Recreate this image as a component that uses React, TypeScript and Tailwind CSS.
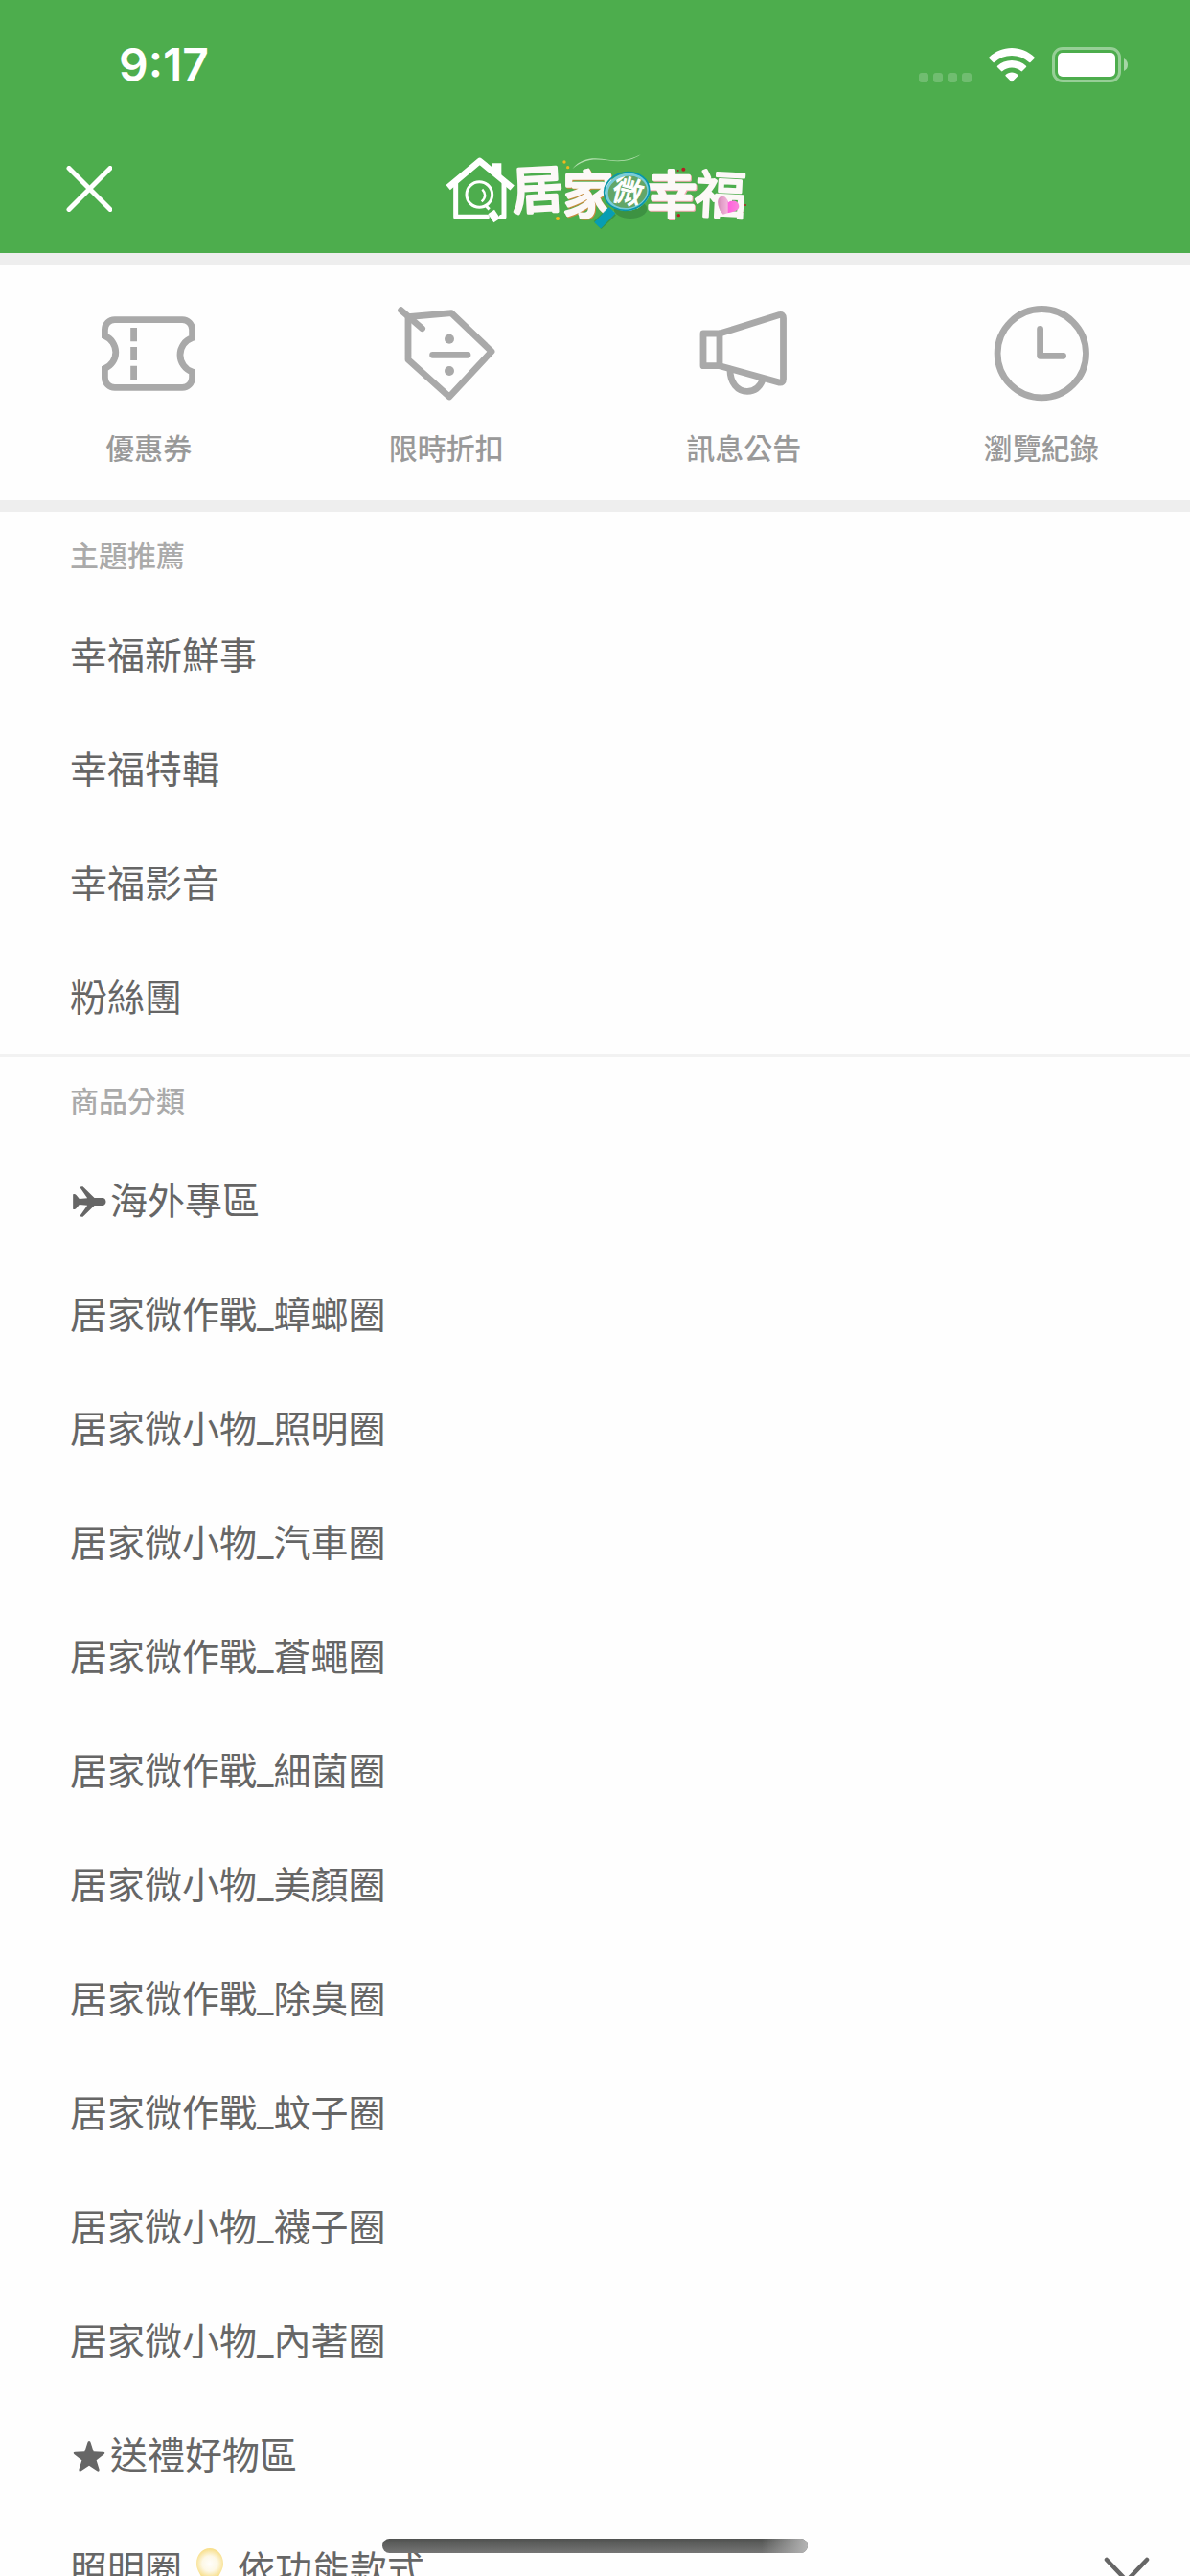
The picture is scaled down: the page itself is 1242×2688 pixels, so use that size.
import React, { useState } from 'react';

type IconProps = { children: React.ReactNode };

const IconFrame = ({ children }: IconProps) => (
  <svg
    viewBox="0 0 100 100"
    className="size-[100px] overflow-visible"
    fill="none"
    stroke="#a9a9a9"
    strokeWidth="6.8"
    aria-hidden="true"
  >
    {children}
  </svg>
);

const CouponIcon = () => (
  <IconFrame>
    <path d="M4.4 31.5V25a10.3 10.3 0 0 1 10.3-10.3h70.6A10.3 10.3 0 0 1 95.6 25v8.5a18.8 18.8 0 0 0 0 35.5v6a10.3 10.3 0 0 1-10.3 10.3H14.7A10.3 10.3 0 0 1 4.4 75v-9.5a18.4 18.4 0 0 0 0-34Z" />
    <path d="M34.6 23v14.3M34.6 43v14M34.6 62.7V77" />
  </IconFrame>
);

const DiscountIcon = () => (
  <IconFrame>
    <g strokeLinecap="round" strokeLinejoin="round">
      <path d="M10 11.7 55.2 7.7 97 47.7 53 95 10 56.2Z" />
      <path d="M2.6 4.7 24.6 23.7M35.6 51.3H72" />
    </g>
    <circle cx="53" cy="34.7" r="5" fill="#a9a9a9" stroke="none" />
    <circle cx="53" cy="68" r="5" fill="#a9a9a9" stroke="none" />
  </IconFrame>
);

const NewsIcon = () => (
  <IconFrame>
    <g strokeLinejoin="round">
      <path d="M25 29H8v33.7h17Z" />
      <path d="M25 29 87.5 9.6q4-.6 4 3.4v63.6q0 4-4 3.5L25 62.7" />
      <path d="M36 67c0 13 7.5 22.3 18 22.3 7 0 13-4.3 16-12" />
    </g>
  </IconFrame>
);

const HistoryIcon = () => (
  <IconFrame>
    <circle cx="50.3" cy="49.7" r="46.2" />
    <path d="M48.6 24.3v28h24" strokeLinecap="round" strokeLinejoin="round" />
  </IconFrame>
);

const PlaneIcon = () => (
  <svg viewBox="0 0 105 96" className="h-8 w-9 shrink-0" fill="#666" aria-hidden="true">
    <path d="M2 25q6-2 10 2l10 12 25-2L24 4q2-4 9-3l36 35h24c8 0 12 5 12 12s-4 12-12 12H69L33 95q-7 1-9-3l23-33-25-2-10 12q-4 4-10 2Z" />
  </svg>
);

const StarIcon = () => (
  <svg viewBox="0 0 100 96" className="h-8 w-9 shrink-0" fill="#666" aria-hidden="true">
    <path d="M50 0q4 0 5 5l9 29 30 1q8 1 3 7L73 61l9 29q0 7-7 4L50 77 25 94q-7 3-7-4l9-29L3 42q-5-6 3-7l30-1 9-29q1-5 5-5Z" />
  </svg>
);

const BulbIcon = () => (
  <svg viewBox="0 0 28 46" className="mx-[15px] h-[46px] w-7 shrink-0" aria-hidden="true">
    <defs>
      <radialGradient id="bulb" gradientUnits="userSpaceOnUse" cx="14" cy="16" r="20">
        <stop offset="0" stopColor="#fffefb" />
        <stop offset="0.4" stopColor="#fdf8e6" />
        <stop offset="0.75" stopColor="#f8e08e" />
        <stop offset="1" stopColor="#f3d57a" />
      </radialGradient>
    </defs>
    <path d="M14 0C6 0 0 7 0 16c0 8 6 12 7 20h14c1-8 7-12 7-20C28 7 22 0 14 0Z" fill="url(#bulb)" />
    <path d="M7 37h14v6q-7 5-14 0Z" fill="#a8a8a8" />
  </svg>
);

const Logo = () => (
  <svg
    viewBox="3 -3 1080 360"
    className="h-[120px] w-[360px]"
    role="img"
    aria-label="居家微幸福"
    fontFamily="'Noto Sans CJK TC', sans-serif"
  >
    <defs>
      <linearGradient id="heart" x1="0" x2="1">
        <stop offset="0" stopColor="#d58bb8" />
        <stop offset="0.45" stopColor="#f3b5dc" />
        <stop offset="0.5" stopColor="#ff62dc" />
        <stop offset="1" stopColor="#fb86dc" />
      </linearGradient>
    </defs>

    {/* house */}
    <g fill="none" stroke="#fff" strokeWidth="15" strokeLinejoin="round">
      <path d="M83 173 182 90l102 84" strokeWidth="20" />
      <path d="M107 158v107h98M250 265h8V158" strokeLinecap="round" />
      <circle cx="181" cy="195" r="40" strokeWidth="9" />
      <path d="M190 179q18 19-2 38" strokeWidth="7" />
      <path d="m198 227 14 14" strokeWidth="9" />
      <path d="m218 249 18 27" strokeWidth="24" strokeLinejoin="miter" />
    </g>
    <path d="M220 97h30v50l-30-24Z" fill="#fff" />

    <path d="M472 115c32-42 80-34 112-29 42 6 74-1 102-16-27 20-62 24-103 18-43-6-77-5-111 27Z" fill="#d5f0d0" opacity=".75" />

    <g fontSize="160" fontWeight="400" fill="#fcf8f7" stroke="#fcf8f7" strokeWidth="10" strokeLinejoin="round">
      <text x="283" y="238" transform="rotate(-3 360 170)">居</text>
      <text x="445" y="258" stroke="#c68a3c" fill="#c68a3c">家</text>
      <text x="442" y="255">家</text>
      <text x="705" y="258" stroke="#f5a9b0" fill="#f5a9b0">幸</text>
      <text x="702" y="256">幸</text>
      <text x="857" y="254" strokeWidth="8" transform="rotate(3 938 190)">福</text>
    </g>

    {/* magnifier over the middle character */}
    <ellipse cx="654" cy="240" rx="52" ry="30" fill="#2b7135" opacity=".45" />
    <path d="m597 247-46 44" stroke="#237a48" strokeWidth="34" opacity=".5" />
    <path d="m597 244-46 48" stroke="#079db3" strokeWidth="28" />
    <ellipse cx="645" cy="187" rx="64" ry="54" fill="#62a668" />
    <text
      x="598"
      y="222"
      fontSize="96"
      fontWeight="400"
      fill="#fff"
      stroke="#fff"
      strokeWidth="3"
      transform="rotate(14 650 190)"
    >
      微
    </text>
    <g fill="none" transform="rotate(-12 645 187)">
      <ellipse cx="645" cy="187" rx="66" ry="54" stroke="#79ccda" strokeWidth="9" />
      <ellipse cx="643" cy="184" rx="71" ry="59" stroke="#0797aa" strokeWidth="5" />
    </g>

    <path d="M944 257c-24-27-19-56-3-57 12 0 17 11 20 20 8-9 32-8 33 12 0 18-26 17-50 25Z" fill="url(#heart)" />
    <g fill="#f0b91e">
      <circle cx="447" cy="93" r="5" />
      <circle cx="458" cy="110" r="5" />
      <circle cx="426" cy="270" r="6" />
    </g>
    <g fill="#b51e23">
      <circle cx="820" cy="116" r="6" />
      <circle cx="803" cy="120" r="3" />
      <circle cx="805" cy="260" r="5" />
      <circle cx="1014" cy="228" r="3" />
      <circle cx="1009" cy="250" r="2" />
    </g>
  </svg>
);

const StatusBar = () => (
  <div className="flex h-[132px] items-start justify-between pl-[124px] pr-[64px] pt-[49px] text-white">
    <time className="font-['Inter'] text-[48px] font-semibold leading-[38px]">9:17</time>
    <div className="flex items-end">
      <div className="mr-[18px] flex gap-[5px]">
        {[0, 1, 2, 3].map((dot) => (
          <span key={dot} className="size-[10px] rounded-[3px] bg-white/20" />
        ))}
      </div>
      <svg viewBox="0 0 48 36" className="mr-[18px] h-9 w-12" fill="#fff" aria-label="Wi-Fi">
        <path d="M24 0C15 0 7 3.5.5 9.5q-.6.7 0 1.400l4 4q.7.6 1.400 0C11 10.300 17 8 24 8s13 2.300 18.100 6.900q.7.600 1.400 0l4-4q.6-.7 0-1.400C41 3.500 33 0 24 0Z" />
        <path d="M24 13c-6 0-11 2.200-15 5.700q-.6.700 0 1.400l4 4q.7.600 1.400 0c2.600-2.300 6-3.600 9.600-3.600s7 1.300 9.600 3.600q.7.600 1.400 0l4-4q.6-.7 0-1.400C35 15.200 30 13 24 13Z" />
        <path d="M24 25.500c-2.500 0-4.700 1-6.400 2.400q-.6.600 0 1.300l5.700 5.800q.7.700 1.400 0l5.700-5.800q.6-.7 0-1.300c-1.700-1.400-3.900-2.400-6.400-2.400Z" />
      </svg>
      <svg viewBox="0 0 80 37" className="h-[37px] w-20" aria-label="Battery">
        <rect x="1.500" y="1.500" width="69" height="34" rx="9.500" fill="none" stroke="#fff" strokeOpacity=".42" strokeWidth="3" />
        <rect x="6" y="6" width="60" height="25" rx="5" fill="#fff" />
        <path d="M75 12q4 2 4 6.500T75 25Z" fill="#fff" opacity=".5" />
      </svg>
    </div>
  </div>
);

const shortcuts = [
  { label: '優惠券', icon: CouponIcon },
  { label: '限時折扣', icon: DiscountIcon },
  { label: '訊息公告', icon: NewsIcon },
  { label: '瀏覽紀錄', icon: HistoryIcon },
];

const topics = ['幸福新鮮事', '幸福特輯', '幸福影音', '粉絲團'];

const categories = [
  { label: '海外專區', icon: PlaneIcon },
  { label: '居家微作戰_蟑螂圈' },
  { label: '居家微小物_照明圈' },
  { label: '居家微小物_汽車圈' },
  { label: '居家微作戰_蒼蠅圈' },
  { label: '居家微作戰_細菌圈' },
  { label: '居家微小物_美顏圈' },
  { label: '居家微作戰_除臭圈' },
  { label: '居家微作戰_蚊子圈' },
  { label: '居家微小物_襪子圈' },
  { label: '居家微小物_內著圈' },
  { label: '送禮好物區', icon: StarIcon },
];

const SectionTitle = ({ children }: { children: React.ReactNode }) => (
  <h2 className="flex h-[90px] items-center px-[73px] pt-[3px] text-[30px] font-medium text-[#aaa]">{children}</h2>
);

const MenuLink = ({ label, icon: Icon }: { label: string; icon?: React.ComponentType }) => (
  <li>
    <a href="#" className="flex h-[119px] items-center gap-1 px-[73px] pt-[2px]">
      {Icon && (
        <span className="ml-[2px]">
          <Icon />
        </span>
      )}
      <span>{label}</span>
    </a>
  </li>
);

const App = () => {
  const [expanded, setExpanded] = useState(false);

  return (
    <div className="flex h-screen flex-col overflow-hidden bg-[#fefefe] font-['Roboto','Noto_Sans_CJK_TC',sans-serif] text-[39px] leading-[60px] text-[#666]">
      <header className="shrink-0 bg-[#4dad4d]">
        <StatusBar />
        <div className="grid h-[132px] grid-cols-[1fr_auto_1fr] items-center pb-[2px]">
          <button type="button" aria-label="關閉" className="ml-[69px] size-12">
            <svg viewBox="0 0 48 48" stroke="#fff" strokeWidth="5" strokeLinecap="round" aria-hidden="true">
              <path d="m3 2.500 43 43M46 2.500l-43 43" />
            </svg>
          </button>
          <Logo />
        </div>
      </header>

      <nav className="grid shrink-0 grid-cols-4 border-y-[12px] border-[#eee]">
        {shortcuts.map(({ label, icon: Icon }) => (
          <a
            key={label}
            href="#"
            className="flex flex-col items-center gap-[30px] pb-[33px] pt-[43px] text-[30px] font-medium leading-[40px] text-[#999]"
          >
            <Icon />
            <span>{label}</span>
          </a>
        ))}
      </nav>

      <main className="min-h-0 flex-1 overflow-y-auto [scrollbar-width:none]">
        <section className="border-b-[3px] border-[#f2f2f2]">
          <SectionTitle>主題推薦</SectionTitle>
          <ul>
            {topics.map((label) => (
              <MenuLink key={label} label={label} />
            ))}
          </ul>
        </section>

        <section>
          <SectionTitle>商品分類</SectionTitle>
          <ul>
            {categories.map((item) => (
              <MenuLink key={item.label} {...item} />
            ))}
            <li>
              <button
                type="button"
                aria-expanded={expanded}
                onClick={() => setExpanded(!expanded)}
                className="flex h-[119px] w-full items-center justify-between pl-[73px] pr-[42px] pt-[2px]"
              >
                <span className="flex items-center">
                  照明圈
                  <BulbIcon />
                  依功能款式
                </span>
                <svg viewBox="0 0 48 28" className="h-7 w-12" fill="none" stroke="#666" strokeWidth="4.500" strokeLinecap="round" aria-hidden="true">
                  <path d="m3 3 21 22L45 3" />
                </svg>
              </button>
            </li>
          </ul>
        </section>
      </main>

      {/* home indicator */}
      <div className="fixed bottom-6 left-1/2 h-[15px] w-[444px] -translate-x-1/2 rounded-full bg-linear-to-b from-[#505250] to-[#757575]">
        <div className="ml-auto h-full w-12 rounded-r-full bg-linear-to-r from-transparent to-[#b4b4b4]" />
      </div>
    </div>
  );
};

export default App;
